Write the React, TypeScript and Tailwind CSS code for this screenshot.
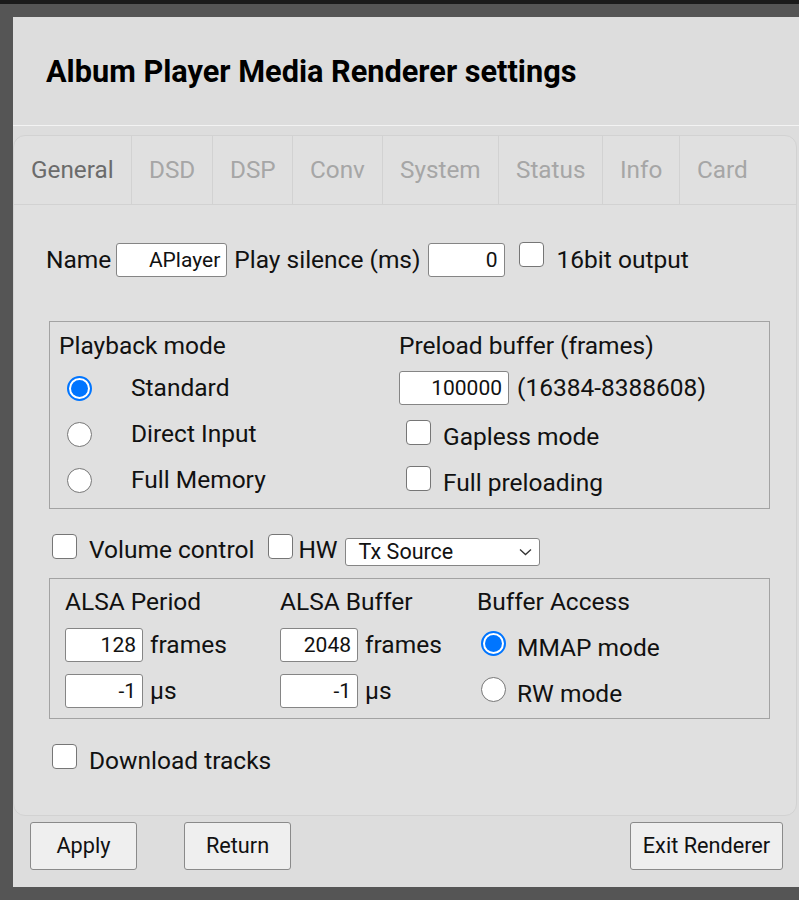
import React from 'react';

const TABS = [
  { label: 'General', w: 'w-[118px]', active: true },
  { label: 'DSD', w: 'w-[81px]' },
  { label: 'DSP', w: 'w-[80px]' },
  { label: 'Conv', w: 'w-[90px]' },
  { label: 'System', w: 'w-[116px]' },
  { label: 'Status', w: 'w-[104px]' },
  { label: 'Info', w: 'w-[77px]' },
  { label: 'Card', w: 'flex-1', last: true },
];

function Checkbox({ className = '' }: { className?: string }) {
  return (
    <span
      className={`block shrink-0 w-[25px] h-[25px] rounded-[4px] border border-[#767676] bg-white ${className}`}
    />
  );
}

function Radio({ checked = false, className = '' }: { checked?: boolean; className?: string }) {
  if (checked) {
    return (
      <span
        className={`flex shrink-0 items-center justify-center w-[25px] h-[25px] rounded-full border-2 border-[#0075ff] bg-white ${className}`}
      >
        <span className="block w-[17px] h-[17px] rounded-full bg-[#0075ff]" />
      </span>
    );
  }
  return (
    <span
      className={`block shrink-0 w-[25px] h-[25px] rounded-full border border-[#767676] bg-white ${className}`}
    />
  );
}

function NumInput({ value, w }: { value: string; w: string }) {
  return (
    <div
      className={`${w} h-[34px] shrink-0 flex items-center justify-end pr-[6px] rounded-[3px] border border-[#858585] bg-white text-[21px] leading-none`}
    >
      {value}
    </div>
  );
}

function Button({ children, w }: { children: React.ReactNode; w: string }) {
  return (
    <div
      className={`${w} h-[48px] flex items-center justify-center rounded-[3px] border border-[#8a8a8a] bg-[#efefef] text-[21.7px]`}
    >
      {children}
    </div>
  );
}

export default function App() {
  return (
    <div className="min-h-[900px] bg-[#555555] text-[#111] font-['Roboto','Liberation_Sans',sans-serif]">
      <div className="h-[4px] bg-[#1b1b1b]" />
      <div className="pl-[13px] pt-[13px]">
        <div className="h-[870px] bg-[#dddddd] flex flex-col">
          {/* Header */}
          <div className="h-[109px] shrink-0 flex items-center pl-[33px] pt-[2px] border-b border-[#f3f3f3]">
            <h1 className="text-[30.7px] font-bold leading-none text-black">
              Album Player Media Renderer settings
            </h1>
          </div>

          {/* Tab panel */}
          <div className="mt-[9px] mr-[2px] h-[681px] shrink-0 rounded-[12px] border border-[#d2d2d2] bg-[#e0e0e0] flex flex-col">
            <div className="h-[69px] shrink-0 flex border-b border-[#d2d2d2]">
              {TABS.map((t) => (
                <div
                  key={t.label}
                  className={`${t.w} flex items-center pl-[17px] text-[24.3px] ${t.last ? '' : 'border-r border-[#d2d2d2]'} ${t.active ? 'text-[#6b6b6b]' : 'text-[#a6a6a6]'}`}
                >
                  {t.label}
                </div>
              ))}
            </div>

            <div className="pl-[32px] text-[24.5px] leading-[28px]">
              {/* Name row */}
              <div className="mt-[38px] h-[34px] flex items-center">
                <span>Name</span>
                <div className="ml-[5px] w-[111px] h-[34px] flex items-center justify-end pr-[6px] rounded-[3px] border border-[#858585] bg-white text-[21px] leading-none">
                  APlayer
                </div>
                <span className="ml-[7px]">Play silence (ms)</span>
                <div className="ml-[7px]">
                  <NumInput value="0" w="w-[77px]" />
                </div>
                <Checkbox className="ml-[14px] self-start -mt-[1px]" />
                <span className="ml-[13px]">16bit output</span>
              </div>

              {/* Playback fieldset */}
              <div className="mt-[44px] ml-[3px] w-[721px] h-[188px] border border-[#a3a3a3] flex pt-[5px]">
                <div className="w-[349px] pl-[9px]">
                  <div className="h-[38px] flex items-center">Playback mode</div>
                  {['Standard', 'Direct Input', 'Full Memory'].map((l, i) => (
                    <div key={l} className="h-[46px] flex items-center">
                      <Radio checked={i === 0} className="ml-[8px]" />
                      <span className="ml-[39px]">{l}</span>
                    </div>
                  ))}
                </div>
                <div className="flex-1">
                  <div className="h-[38px] flex items-center">Preload buffer (frames)</div>
                  <div className="h-[46px] flex items-center">
                    <NumInput value="100000" w="w-[110px]" />
                    <span className="ml-[8px]">(16384-8388608)</span>
                  </div>
                  <div className="h-[46px] flex items-center">
                    <Checkbox className="ml-[7px] mb-[3px]" />
                    <span className="ml-[12px] pt-[6px]">Gapless mode</span>
                  </div>
                  <div className="h-[46px] flex items-center">
                    <Checkbox className="ml-[7px] mb-[3px]" />
                    <span className="ml-[12px] pt-[6px]">Full preloading</span>
                  </div>
                </div>
              </div>

              {/* Volume row */}
              <div className="mt-[24px] h-[34px] flex items-start">
                <Checkbox className="ml-[6px] mt-[1px]" />
                <span className="ml-[12px] mt-[3px]">Volume control</span>
                <Checkbox className="ml-[14px] mt-[1px]" />
                <span className="ml-[5px] mt-[3px]">HW</span>
                <div className="ml-[7px] mt-[5px] w-[195px] h-[28px] flex items-center justify-between pl-[13px] pr-[7px] rounded-[3px] border border-[#858585] bg-white text-[21.5px] leading-none">
                  <span>Tx Source</span>
                  <svg width="13" height="8" viewBox="0 0 13 8" fill="none">
                    <path d="M1 1.5l5.5 5 5.5-5" stroke="#333" strokeWidth="1.3" />
                  </svg>
                </div>
              </div>

              {/* ALSA fieldset */}
              <div className="mt-[11px] ml-[3px] w-[721px] h-[141px] border border-[#a3a3a3] flex pl-[15px] pt-[9px]">
                <div className="w-[215px]">
                  <div className="h-[28px] flex items-center">ALSA Period</div>
                  <div className="mt-[12px] h-[34px] flex items-center">
                    <NumInput value="128" w="w-[78px]" />
                    <span className="ml-[7px]">frames</span>
                  </div>
                  <div className="mt-[12px] h-[34px] flex items-center">
                    <NumInput value="-1" w="w-[78px]" />
                    <span className="ml-[7px]">µs</span>
                  </div>
                </div>
                <div className="w-[197px]">
                  <div className="h-[28px] flex items-center">ALSA Buffer</div>
                  <div className="mt-[12px] h-[34px] flex items-center">
                    <NumInput value="2048" w="w-[78px]" />
                    <span className="ml-[7px]">frames</span>
                  </div>
                  <div className="mt-[12px] h-[34px] flex items-center">
                    <NumInput value="-1" w="w-[78px]" />
                    <span className="ml-[7px]">µs</span>
                  </div>
                </div>
                <div className="flex-1">
                  <div className="h-[28px] flex items-center">Buffer Access</div>
                  <div className="mt-[12px] h-[34px] flex items-center">
                    <Radio checked className="ml-[4px] mb-[3px]" />
                    <span className="ml-[11px] pt-[6px]">MMAP mode</span>
                  </div>
                  <div className="mt-[12px] h-[34px] flex items-center">
                    <Radio className="ml-[4px] mb-[3px]" />
                    <span className="ml-[11px] pt-[6px]">RW mode</span>
                  </div>
                </div>
              </div>

              {/* Download row */}
              <div className="mt-[25px] flex items-start">
                <Checkbox className="ml-[6px]" />
                <span className="ml-[12px] mt-[3px]">Download tracks</span>
              </div>
            </div>
          </div>

          {/* Buttons */}
          <div className="mt-[6px] flex pl-[17px] pr-[16px]">
            <Button w="w-[107px]">Apply</Button>
            <div className="ml-[47px]">
              <Button w="w-[107px]">Return</Button>
            </div>
            <div className="ml-auto">
              <Button w="w-[153px]">Exit Renderer</Button>
            </div>
          </div>
        </div>
      </div>
    </div>
  );
}
